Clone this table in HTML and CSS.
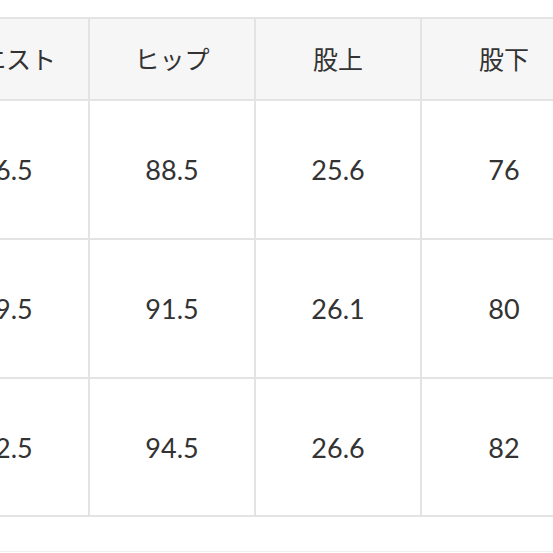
FILE: index.html
```html
<!DOCTYPE html>
<html lang="ja">
<head>
<meta charset="utf-8">
<link rel="stylesheet" href="styles.css">
</head>
<body>
<div class="viewport">
  <div class="size-table">
    <div class="cell head">ウエスト</div>
    <div class="cell head">ヒップ</div>
    <div class="cell head">股上</div>
    <div class="cell head">股下</div>

    <div class="cell num">66.5</div>
    <div class="cell num">88.5</div>
    <div class="cell num">25.6</div>
    <div class="cell num">76</div>

    <div class="cell num">69.5</div>
    <div class="cell num">91.5</div>
    <div class="cell num">26.1</div>
    <div class="cell num">80</div>

    <div class="cell num">72.5</div>
    <div class="cell num">94.5</div>
    <div class="cell num">26.6</div>
    <div class="cell num">82</div>
  </div>
  <div class="note"></div>
</div>
</body>
</html>
```

FILE: styles.css
```css
html, body {
  margin: 0;
  padding: 0;
  background: #ffffff;
}

.viewport {
  width: 553px;
  height: 553px;
  overflow: hidden;
  font-family: "Noto Sans CJK JP", "Noto Sans", sans-serif;
  color: #333333;
}

.size-table {
  display: grid;
  grid-template-columns: repeat(4, 164px);
  grid-template-rows: 80px 137px 137px 136px;
  gap: 2px;
  background: #e3e3e3;
  border: 2px solid #e3e3e3;
  width: max-content;
  margin-left: -78px;
  margin-top: 17px;
}

.cell {
  display: flex;
  align-items: center;
  justify-content: center;
  background: #ffffff;
}

.head {
  background: #f6f6f6;
  font-size: 25px;
  line-height: 1;
  padding-bottom: 2px;
}

.num {
  font-family: "Lato", "Noto Sans", sans-serif;
  font-size: 27px;
  line-height: 1;
}

.note {
  height: 34px;
  border-bottom: 1px solid #efefef;
}
```
